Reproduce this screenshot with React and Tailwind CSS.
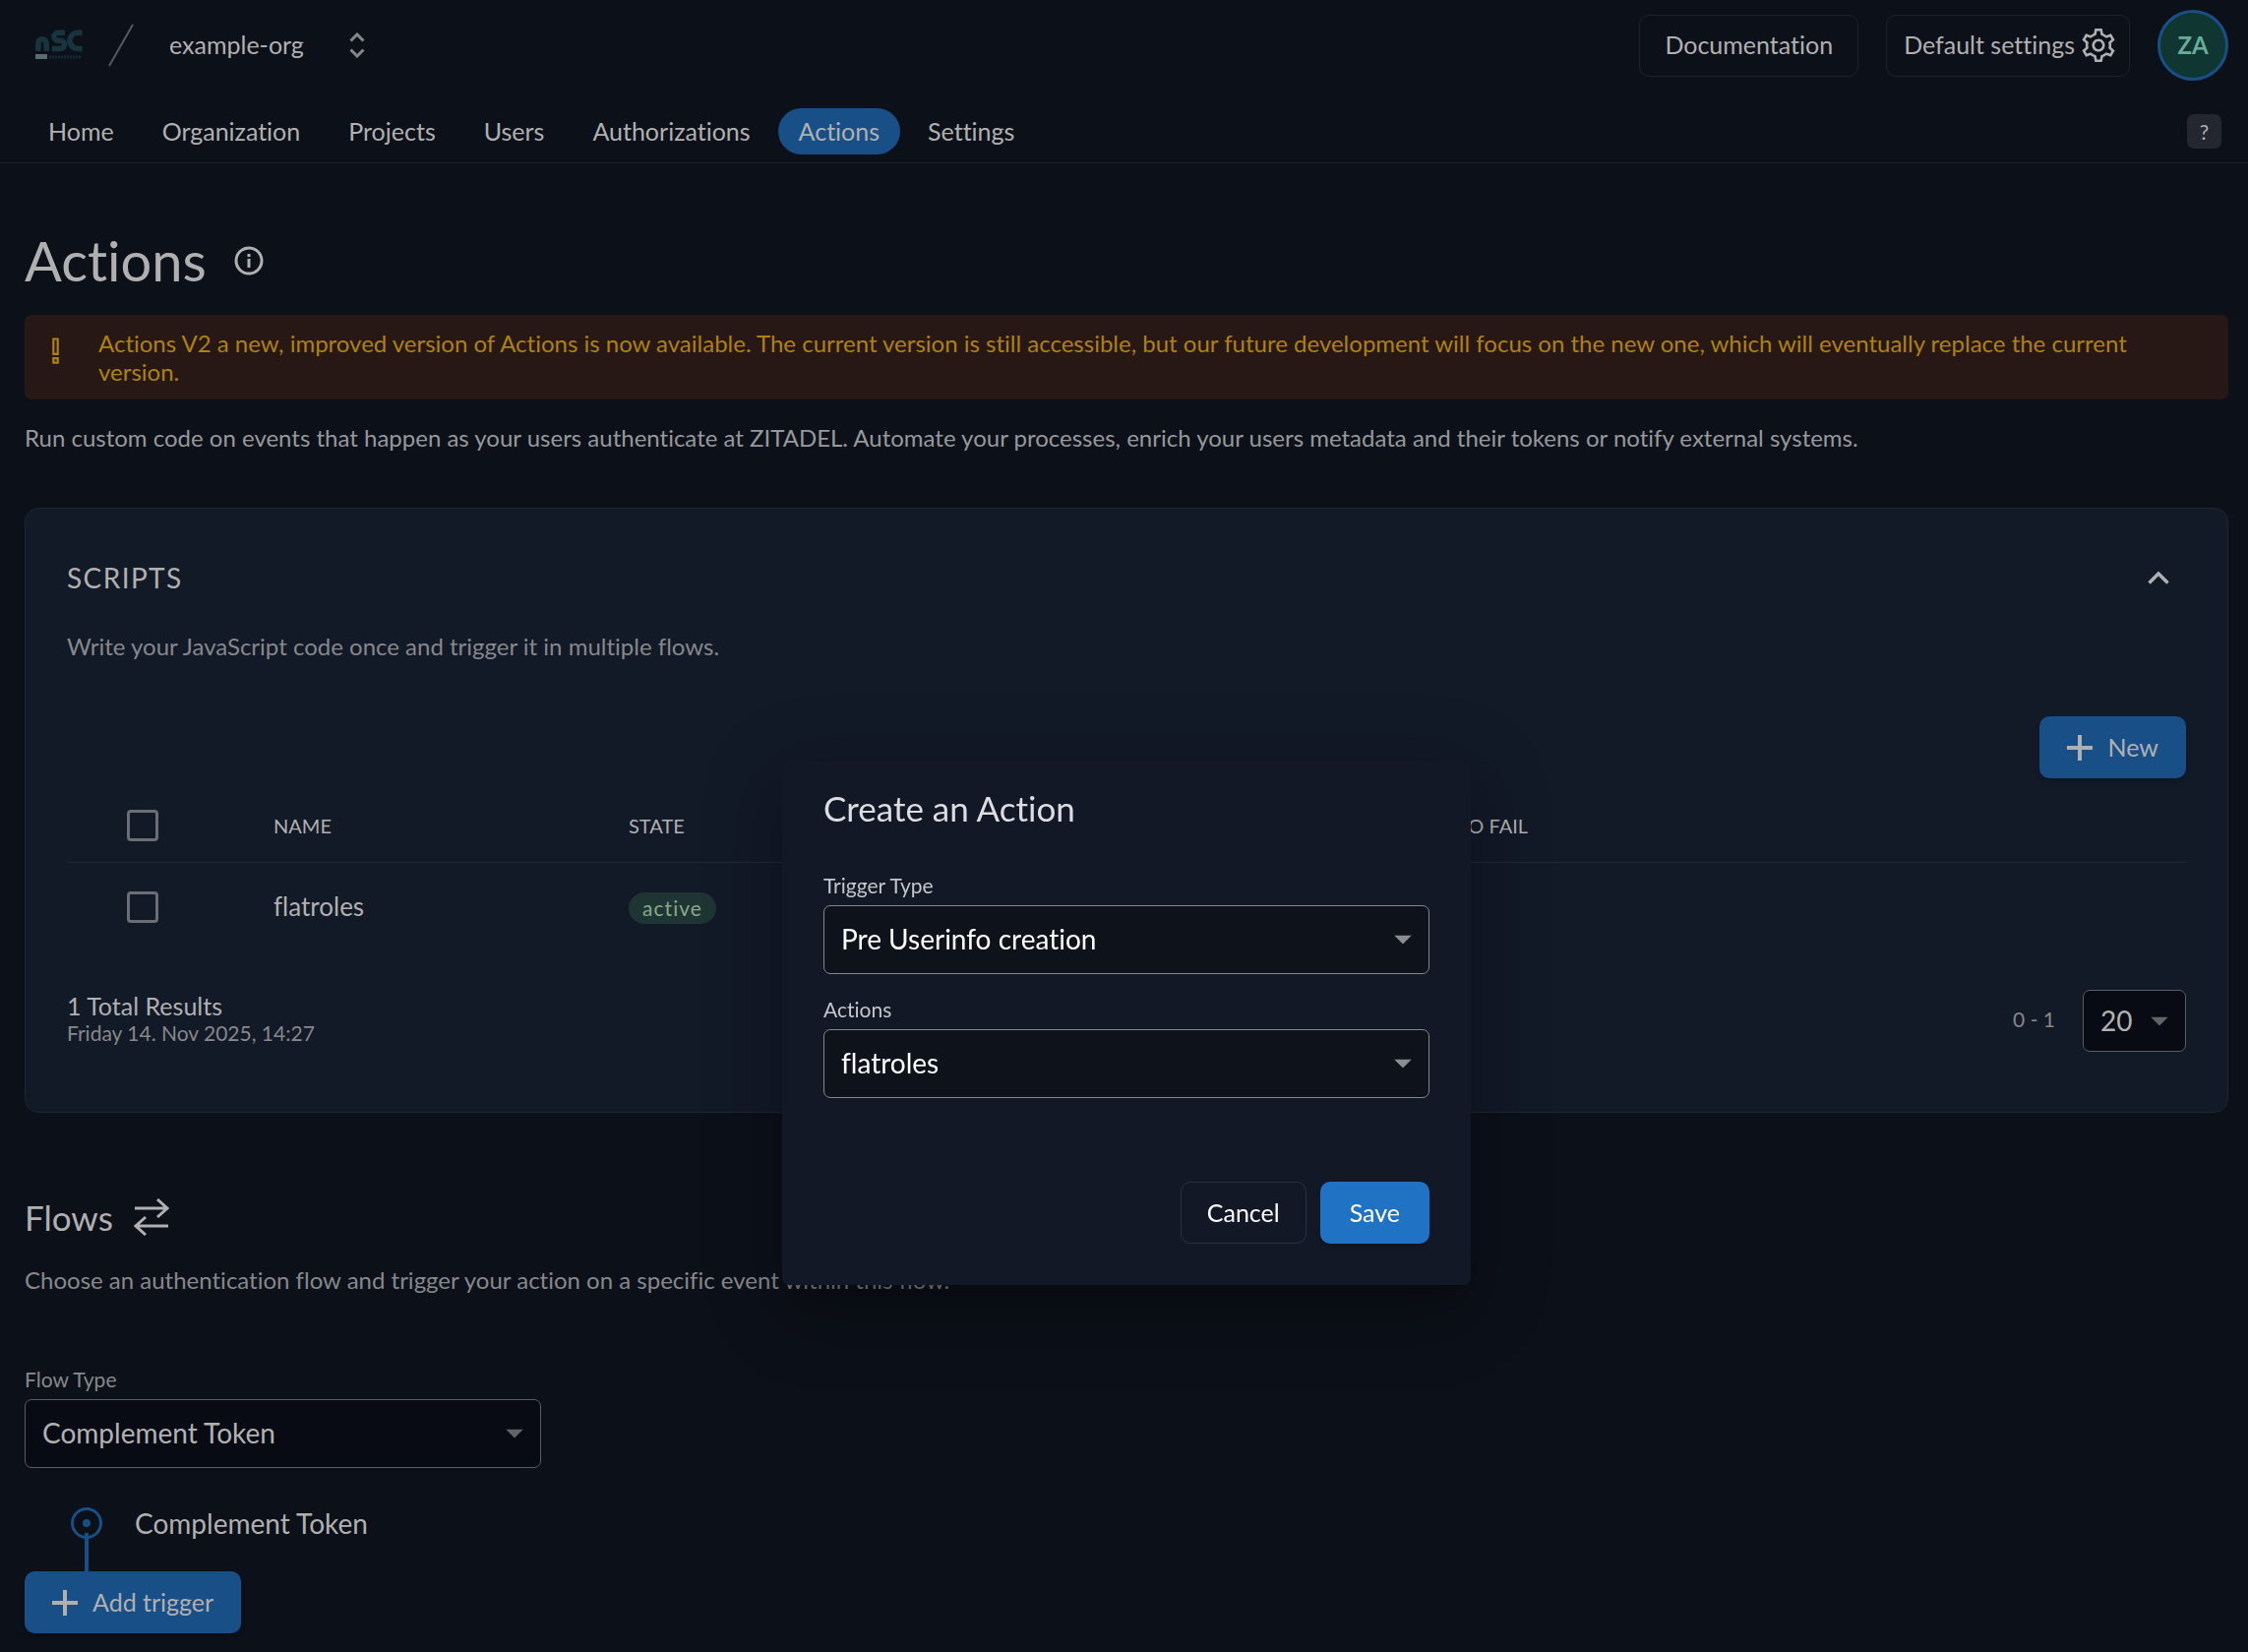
import clsx from 'clsx';
import { LiaCogSolid, LiaExclamationSolid } from 'react-icons/lia';

const NAV_ITEMS = ['Home', 'Organization', 'Projects', 'Users', 'Authorizations', 'Actions', 'Settings'];

const SCRIPTS = [{ id: 'flatroles', name: 'flatroles', state: 'active', timeout: '10s', allowedToFail: '' }];

const Logo = () => (
  <svg width="48" height="32" viewBox="0 0 48 32" aria-label="nSC">
    <g fill="none" stroke="#17343f" strokeWidth="5.5">
      <path d="M2.8 22V14a4.2 4.2 0 0 1 8.4 0v8" />
      <path d="M30 3.200H23a3.700 3.700 0 0 0 0 8h2.500a4 4 0 0 1 0 8.200H17" />
      <path d="M47.500 3.200H43a8 8 0 0 0-8 8.100a8 8 0 0 0 8 8.100h4.500" />
    </g>
    <rect x="0" y="25" width="12" height="5" fill="#5b6b73" />
    <path d="M14 28h33" stroke="#142a34" strokeWidth="3" strokeDasharray="2 1" />
  </svg>
);

const PlusIcon = () => (
  <svg width="26" height="26" viewBox="0 0 26 26" fill="none" stroke="currentColor" strokeWidth="4" aria-hidden="true">
    <path d="M13 0v26M0 13h26" />
  </svg>
);

const SelectField = ({ id, label, hideLabel, value, bright, className }) => (
  <div className={clsx('flex flex-col', className)}>
    <label
      htmlFor={id}
      className={clsx(hideLabel ? 'sr-only' : 'mb-1.5 text-[21px] leading-7', bright ? 'text-[#c4c6ca]' : 'text-[#86888c]')}
    >
      {label}
    </label>
    <div className="relative">
      <select
        id={id}
        defaultValue={value}
        className={clsx(
          'w-full appearance-none rounded-[7px] border pb-0.5 pl-[17px] text-[28px]',
          hideLabel ? 'h-[63px]' : 'h-[70px]',
          bright ? 'border-[#84868b] bg-[#0e121b] text-white' : 'border-[#5a5c61] bg-[#080b13] text-[#b2b2b3]'
        )}
      >
        <option>{value}</option>
      </select>
      <svg
        width="18"
        height="9"
        viewBox="0 0 18 9"
        aria-hidden="true"
        className={clsx('pointer-events-none absolute top-1/2 right-[18px] -translate-y-1/2', bright ? 'text-[#8b8d91]' : 'text-[#626367]')}
      >
        <path d="M0 0h18L9 9z" fill="currentColor" />
      </svg>
    </div>
  </div>
);

const Header = () => (
  <header className="border-b border-[#1e222c]">
    <div className="flex h-[92px] items-center pr-5 pl-9">
      <Logo />
      <svg width="26" height="44" viewBox="0 0 26 44" className="ml-[26px]" aria-hidden="true">
        <path d="M1 43L25 1" stroke="#55585e" strokeWidth="2" />
      </svg>
      <button type="button" className="ml-9 flex items-center gap-[46px] text-[25px]">
        example-org
        <svg width="16" height="26" viewBox="0 0 16 26" fill="none" stroke="#858789" strokeWidth="3" aria-hidden="true">
          <path d="M1.500 8.500L8 2l6.500 6.500M1.500 17.500L8 24l6.500-6.500" />
        </svg>
      </button>
      <div className="ml-auto flex items-center gap-7">
        <a href="#docs" className="flex h-[63px] items-center rounded-[10px] border border-[#1e222c] px-[25px] text-[25px]">
          Documentation
        </a>
        <button type="button" className="flex h-[63px] items-center gap-[3px] rounded-[10px] border border-[#1e222c] pr-[10px] pl-[17px] text-[25px]">
          Default settings
          <LiaCogSolid size={42} aria-hidden="true" />
        </button>
        <button type="button" className="h-[72px] w-[72px] rounded-full border-3 border-[#194f87] bg-[#0f3630] text-[24px] font-bold text-[#69aa9c]">
          ZA
        </button>
      </div>
    </div>
    <div className="flex h-[73px] items-center justify-between pt-[10px] pr-[27px] pl-[28px]">
      <nav className="flex gap-[7px]">
        {NAV_ITEMS.map((item) => (
          <a
            key={item}
            href={`#${item.toLowerCase()}`}
            className={clsx('flex h-[47px] items-center rounded-full px-[21px] text-[25px]', item === 'Actions' && 'bg-[#194f87]')}
          >
            {item}
          </a>
        ))}
      </nav>
      <button type="button" className="h-[35px] w-[35px] rounded-[7px] bg-[#24272f] text-[21px]">?</button>
    </div>
  </header>
);

const Checkbox = ({ label }) => (
  <input type="checkbox" aria-label={label} className="block h-8 w-8 appearance-none rounded-[4px] border-3 border-[#6b6e74]" />
);

const ScriptsCard = () => (
  <section className="mt-[53px] rounded-[14px] border border-[#1d2532] bg-[#121927] px-[42px] pt-[49px] pb-[61px]">
    <div className="flex h-[42px] items-center justify-between pr-[17px]">
      <h2 className="text-[28px] tracking-wider">SCRIPTS</h2>
      <button type="button" aria-label="Collapse">
        <svg width="22" height="14" viewBox="0 0 22 14" fill="none" stroke="currentColor" strokeWidth="3.5" aria-hidden="true">
          <path d="M1.500 12.500L11 3l9.500 9.500" />
        </svg>
      </button>
    </div>
    <p className="mt-[31px] text-[24px] leading-[36px] text-[#86888c]">Write your JavaScript code once and trigger it in multiple flows.</p>
    <div className="mt-[53px] flex justify-end">
      <button type="button" className="flex h-[63px] items-center gap-[16px] rounded-[10px] bg-[#194f87] px-[28px] text-[25px] shadow-md">
        <PlusIcon />
        New
      </button>
    </div>
    <table className="mt-[12px] w-full table-fixed text-left">
      <thead>
        <tr className="h-[73px] border-b border-[#212733] text-[20px]">
          <th className="w-[210px] pl-[61px]"><Checkbox label="Select all" /></th>
          <th className="w-[361px] font-normal">NAME</th>
          <th className="w-[361px] font-normal">STATE</th>
          <th className="w-[380px] font-normal">TIMEOUT</th>
          <th className="w-[361px] font-normal">ALLOWED TO FAIL</th>
          <th></th>
        </tr>
      </thead>
      <tbody>
        {SCRIPTS.map((script) => (
          <tr key={script.id} className="h-[91px] text-[26px]">
            <td className="pl-[61px]"><Checkbox label={script.name} /></td>
            <td>{script.name}</td>
            <td>
              <span className="inline-flex h-8 items-center rounded-full bg-[#1f3534] px-[14px] text-[21px] tracking-wider text-[#84aa8b]">{script.state}</span>
            </td>
            <td>{script.timeout}</td>
            <td>{script.allowedToFail}</td>
            <td></td>
          </tr>
        ))}
      </tbody>
    </table>
    <div className="mt-[39px] flex items-center justify-between">
      <div className="pb-1.5">
        <p className="text-[25px] leading-[30px]">1 Total Results</p>
        <p className="text-[21px] leading-[26px] text-[#86888c]">Friday 14. Nov 2025, 14:27</p>
      </div>
      <div className="flex items-center gap-7">
        <span className="pb-1 text-[21px] text-[#86888c]">0 - 1</span>
        <SelectField id="page-size" label="Page size" hideLabel value="20" className="w-[105px]" />
      </div>
    </div>
  </section>
);

const Flows = () => (
  <section className="mt-[84px]">
    <h2 className="flex items-center gap-[21px] text-[35px] leading-[44px]">
      Flows
      <svg width="36" height="38" viewBox="0 0 36 38" fill="none" stroke="currentColor" strokeWidth="3" aria-hidden="true">
        <path d="M1 10h33M24 1l10 9-10 9M35 28H2M12 19L2 28l10 9" />
      </svg>
    </h2>
    <p className="mt-[24px] text-[24px] leading-[36px] text-[#86888c]">
      Choose an authentication flow and trigger your action on a specific event within this flow.
    </p>
    <SelectField id="flow-type" label="Flow Type" value="Complement Token" className="mt-[69px] w-[525px]" />
    <div className="mt-[38px] flex h-[67px] gap-[33px] pl-[47px]">
      <svg width="32" height="67" viewBox="0 0 32 67" fill="none" stroke="#194f87" aria-hidden="true">
        <circle cx="16" cy="18" r="14.500" strokeWidth="3" />
        <circle cx="16" cy="18" r="4" fill="#194f87" stroke="none" />
        <path d="M16 28v39" strokeWidth="4" />
      </svg>
      <span className="text-[28px] leading-[36px]">Complement Token</span>
    </div>
    <button type="button" className="flex h-[63px] items-center gap-[15px] rounded-[10px] bg-[#194f87] px-[28px] text-[25px] shadow-md">
      <PlusIcon />
      Add trigger
    </button>
  </section>
);

const CreateActionDialog = () => (
  <div className="fixed inset-0 flex items-start justify-center pt-[773px] pl-[5px]">
    <div
      role="dialog"
      aria-labelledby="dialog-title"
      className="w-[700px] rounded-[7px] bg-[#121826] px-[42px] pt-[26px] pb-[42px] shadow-[0_19px_26px_-12px_rgba(0,0,0,0.2),0_42px_66px_5px_rgba(0,0,0,0.14),0_16px_80px_14px_rgba(0,0,0,0.12)]"
    >
      <h2 id="dialog-title" className="text-[35px] leading-[44px] text-[#dcdde0]">Create an Action</h2>
      <SelectField id="trigger-type" label="Trigger Type" value="Pre Userinfo creation" bright className="mt-[43px]" />
      <SelectField id="action" label="Actions" value="flatroles" bright className="mt-[22px]" />
      <div className="mt-[85px] flex justify-end gap-[14px] text-[25px] text-white">
        <button type="button" className="h-[63px] rounded-[10px] border border-[#2b3040] px-[26px]">Cancel</button>
        <button type="button" className="h-[63px] rounded-[10px] bg-[#2073c4] px-[30px] shadow-md">Save</button>
      </div>
    </div>
  </div>
);

export default function App() {
  return (
    <div className="min-h-screen overflow-hidden bg-[#0c1019] pb-[18px] font-['Lato',sans-serif] text-[#b0b0b1] [font-variant-ligatures:no-common-ligatures]">
      <Header />
      <main className="pr-5 pl-[25px]">
        <div className="mt-[61px] flex items-center gap-[28px]">
          <h1 className="text-[56px] leading-[76px]">Actions</h1>
          <svg width="30" height="30" viewBox="0 0 30 30" fill="none" stroke="currentColor" strokeWidth="3" aria-hidden="true">
            <circle cx="15" cy="15" r="13" />
            <path d="M15 13v9M15 8v3" />
          </svg>
        </div>
        <div className="mt-[17px] flex rounded-[7px] bg-[#271815] py-[14px] pr-[56px] pl-[14px] text-[#ae8112]">
          <LiaExclamationSolid size={35} className="mt-[5px] mr-[26px] shrink-0" aria-hidden="true" />
          <p className="text-[24px] leading-[29px]">
            Actions V2 a new, improved version of Actions is now available. The current version is still accessible, but our future
            development will focus on the new one, which will eventually replace the current version.
          </p>
        </div>
        <p className="mt-[21px] text-[24px] leading-[36px] text-[#96989b]">
          Run custom code on events that happen as your users authenticate at ZITADEL. Automate your processes, enrich your users
          metadata and their tokens or notify external systems.
        </p>
        <ScriptsCard />
        <Flows />
      </main>
      <CreateActionDialog />
    </div>
  );
}
